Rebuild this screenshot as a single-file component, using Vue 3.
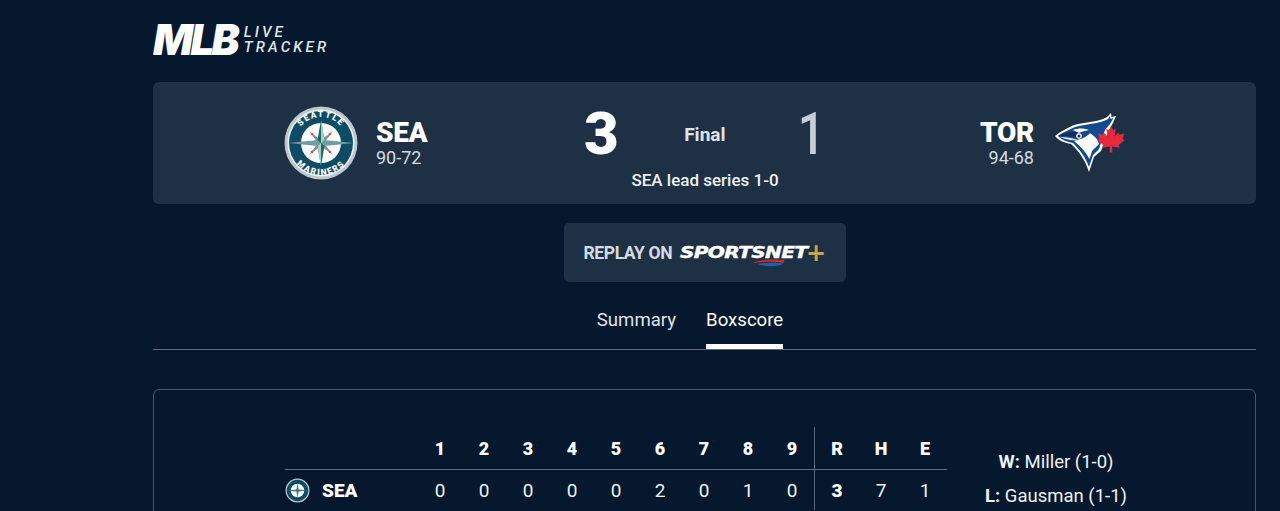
<script setup>
const innings = [1, 2, 3, 4, 5, 6, 7, 8, 9]
const seaLine = [0, 0, 0, 0, 0, 2, 0, 1, 0]
</script>

<template>
  <div class="page">
    <header class="brand">
      <span class="brand-mlb">MLB</span>
      <span class="brand-sub">LIVE<br>TRACKER</span>
    </header>

    <section class="score-card">
      <div class="team">
        <svg class="sea-logo" viewBox="0 0 74 74">
          <defs>
            <path id="arcTop" d="M11 37a26 26 0 0 1 52 0" />
            <path id="arcBottom" d="M5 37a32 32 0 0 0 64 0" />
          </defs>
          <circle cx="37" cy="37" r="36.500" fill="#bcc8ce" />
          <circle cx="37" cy="37" r="33.500" fill="#eef2f3" />
          <circle cx="37" cy="37" r="32" fill="#0e4c66" />
          <circle cx="37" cy="37" r="20" fill="#fff" />
          <text class="ring-text"><textPath href="#arcTop" startOffset="50%" text-anchor="middle">SEATTLE</textPath></text>
          <text class="ring-text"><textPath href="#arcBottom" startOffset="50%" text-anchor="middle">MARINERS</textPath></text>
          <path d="M25 25l12 9 12-9-9 12 9 12-12-9-12 9 9-12z" fill="#7f9099" />
          <path d="M4 37l30-3 3 3-3 3z" fill="#6f9ba2" />
          <path d="M70 37l-30-3-3 3 3 3z" fill="#6f9ba2" />
          <path d="M37 14l3.500 20-3.500 3-3.500-3zM37 60l3.500-20-3.500-3-3.500 3z" fill="#17705f" />
          <path d="M37 14v23l3.500-3zM37 60v-23l-3.500 3z" fill="#a9cfc7" />
          <circle cx="28" cy="28" r="1.300" fill="#d7485c" />
          <circle cx="46" cy="28" r="1.300" fill="#d7485c" />
          <circle cx="28" cy="46" r="1.300" fill="#d7485c" />
          <circle cx="46" cy="46" r="1.300" fill="#d7485c" />
        </svg>
        <div class="team-text">
          <div class="abbr">SEA</div>
          <div class="record">90-72</div>
        </div>
      </div>

      <div class="middle">
        <div class="score-row">
          <span class="runs">3</span>
          <span class="status">Final</span>
          <span class="runs runs-lost">1</span>
        </div>
        <div class="series">SEA lead series 1-0</div>
      </div>

      <div class="team team-right">
        <div class="team-text">
          <div class="abbr">TOR</div>
          <div class="record">94-68</div>
        </div>
        <svg class="tor-logo" viewBox="0 0 70 60">
          <path d="M0 23C6 18 13 15 19 12 30 9 44 9 52 4L56 0 56.500 4 61 3 58 10 54 17 46 38 39 44 34 59C30 47 24 38 16 31 10 30 4 28 0 23z" fill="#fff" />
          <path d="M3 23C8 19 14 17 20 14 30 11 44 11 53 6L55 3 55.500 6 58.500 5 55 11 50 17 44 36 38 42 34 54C31 45 25 37 18 30 12 29 7 27 3 23z" fill="#134a8e" />
          <path d="M19 28C25 26 31 25 35 20 39 23 43 26 44 31L37 38 34.500 46C31 39 25 33 19 28z" fill="#fff" />
          <path d="M18 17C23 15 29 15 34 17 29 18 26 19 24 20 22 19 20 18 18 17z" fill="#fff" />
          <path d="M3 23C9 20 15 19 21 19 24 20 27 22 28 24 22 24 12 23 3 23z" fill="#1a2a55" />
          <path d="M5 24C11 24 18 25 23 27 16 28 10 26 5 24z" fill="#dfe6ee" />
          <circle cx="24" cy="23" r="2.800" fill="#fff" />
          <circle cx="24" cy="23" r="1.500" fill="#1a2a55" />
          <path transform="translate(42 13) scale(.28)" d="M50 0L58 15 67 10 62 38 76 23 79 31 97 28 91 46 99 50 78 68 81 78 54 73 55 95 45 95 46 73 19 78 22 68 1 50 9 46 3 28 21 31 24 23 38 38 33 10 42 15z" fill="#e8283c" />
        </svg>
      </div>
    </section>

    <div class="replay-wrap">
      <a class="replay">
        <span class="replay-label">REPLAY ON</span>
        <span class="sn-logo">
          <span class="sn-word">SPORTSNET</span><span class="sn-plus">+</span>
          <svg class="sn-swoosh" viewBox="0 0 32 8">
            <path d="M0 4C8 0 22 0 32 1L31 4C20 2 10 3 0 4z" fill="#d8281f" />
            <path d="M5 5C14 3 24 3 31 4.500 26 8 14 8 5 5z" fill="#1f5fb0" />
          </svg>
        </span>
      </a>
    </div>

    <nav class="tabs">
      <span class="tab">Summary</span>
      <span class="tab tab-active">Boxscore</span>
    </nav>

    <section class="box-card">
      <div class="box-inner">
        <table class="linescore">
          <thead>
            <tr>
              <th class="team-col"></th>
              <th v-for="n in innings" :key="n">{{ n }}</th>
              <th class="divider">R</th>
              <th>H</th>
              <th>E</th>
            </tr>
          </thead>
          <tbody>
            <tr>
              <td class="team-col">
                <span class="team-cell">
                  <svg class="mini-logo" viewBox="0 0 24 24">
                    <circle cx="12" cy="12" r="11.500" fill="#bcc8ce" />
                    <circle cx="12" cy="12" r="10.300" fill="#0e4c66" />
                    <circle cx="12" cy="12" r="6.500" fill="#fff" />
                    <path d="M12 5l1 6 9 1-9 1-1 6-1-6-9-1 9-1z" fill="#2a7a78" />
                  </svg>
                  SEA
                </span>
              </td>
              <td v-for="(r, i) in seaLine" :key="i">{{ r }}</td>
              <td class="divider strong">3</td>
              <td>7</td>
              <td>1</td>
            </tr>
          </tbody>
        </table>
        <div class="pitchers">
          <div><b>W:</b> Miller (1-0)</div>
          <div><b>L:</b> Gausman (1-1)</div>
        </div>
      </div>
    </section>
  </div>
</template>

<style scoped>
.page {
  width: 1103px;
  height: 511px;
  overflow: hidden;
  margin-left: 153px;
  color: #fff;
  font-family: Roboto, "Liberation Sans", sans-serif;
}

.brand {
  display: flex;
  align-items: flex-end;
  gap: 7px;
  height: 82px;
  padding-bottom: 27px;
  box-sizing: border-box;
}

.brand-mlb {
  font-family: Inter, sans-serif;
  font-weight: 900;
  font-style: italic;
  font-size: 42px;
  line-height: 31px;
  letter-spacing: -2.700px;
}

.brand-sub {
  font-size: 15px;
  line-height: 15px;
  font-style: italic;
  font-weight: 500;
  letter-spacing: 3.100px;
  color: #dfe4ea;
}

.score-card {
  display: grid;
  grid-template-columns: 300px 236px 305px;
  justify-content: center;
  height: 122px;
  background: #1e3044;
  border-radius: 6px;
}

.team {
  display: flex;
  align-items: center;
  gap: 18px;
}

.team-right {
  justify-content: flex-end;
  gap: 21px;
}

.sea-logo {
  width: 74px;
  height: 74px;
}

.tor-logo {
  width: 70px;
  height: 60px;
}

.ring-text {
  font-size: 8.500px;
  font-weight: 900;
  letter-spacing: 1.500px;
  fill: #fff;
}

.team-text {
  display: flex;
  flex-direction: column;
}

.team-right .team-text {
  align-items: flex-end;
}

.abbr {
  font-size: 28px;
  line-height: 30px;
  font-weight: 900;
  letter-spacing: -0.300px;
}

.record {
  font-size: 18px;
  line-height: 20px;
  color: #d5dbe2;
}

.middle {
  display: flex;
  flex-direction: column;
  padding-top: 22px;
}

.score-row {
  display: flex;
  justify-content: space-between;
  align-items: center;
  height: 60px;
}

.runs {
  font-size: 60px;
  line-height: 60px;
  font-weight: 900;
}

.runs-lost {
  display: inline-block;
  margin-right: -5px;
  transform: scaleX(0.8);
  transform-origin: right center;
  font-weight: 500;
  color: #c6ced7;
}

.status {
  font-size: 19px;
  font-weight: 700;
  color: #dfe4ea;
}

.series {
  margin-top: 6px;
  padding-left: 6px;
  text-align: center;
  font-size: 17px;
  font-weight: 500;
  white-space: nowrap;
  color: #eef1f4;
}

.replay-wrap {
  display: flex;
  justify-content: center;
  padding-top: 19px;
}

.replay {
  display: flex;
  align-items: center;
  gap: 8px;
  width: 282px;
  height: 59px;
  padding-left: 20px;
  box-sizing: border-box;
  background: #1e3044;
  border-radius: 5px;
}

.replay-label {
  padding-top: 1px;
  font-size: 17.500px;
  font-weight: 700;
  letter-spacing: -0.400px;
  color: #d5dbe2;
}

.sn-logo {
  position: relative;
  display: flex;
  align-items: center;
}

.sn-word {
  display: inline-block;
  transform: scaleX(1.34);
  transform-origin: left center;
  margin-right: 34px;
  font-family: "DejaVu Sans", sans-serif;
  font-weight: 700;
  font-style: italic;
  font-size: 15px;
  letter-spacing: -0.500px;
  -webkit-text-stroke: 0.4px #fff;
  color: #fff;
}

.sn-plus {
  font-family: "DejaVu Sans", sans-serif;
  font-weight: 700;
  font-size: 24px;
  line-height: 14px;
  margin-left: -3px;
  color: #c9a24a;
}

.sn-swoosh {
  position: absolute;
  left: 72px;
  top: 15px;
  width: 33px;
  height: 8px;
}

.tabs {
  display: flex;
  justify-content: center;
  gap: 30px;
  height: 68px;
  padding-right: 29px;
  box-sizing: border-box;
  border-bottom: 1px solid #5c6b7b;
}

.tab {
  height: 62px;
  padding-top: 26px;
  box-sizing: border-box;
  font-size: 18.600px;
  line-height: 24px;
  color: #dfe4ea;
}

.tab-active {
  height: 67px;
  color: #fff;
  border-bottom: 5px solid #fff;
}

.box-card {
  margin-top: 39px;
  height: 200px;
  padding-top: 37px;
  box-sizing: border-box;
  border: 1px solid #46566a;
  border-radius: 6px;
}

.box-inner {
  display: flex;
  align-items: flex-start;
  padding-left: 131px;
}

.linescore {
  width: 661px;
  border-collapse: collapse;
  table-layout: fixed;
}

.linescore th,
.linescore td {
  width: 44px;
  padding: 0;
  text-align: center;
}

.linescore th {
  height: 42px;
  font-size: 18px;
  font-weight: 900;
  border-bottom: 1px solid #5c6b7b;
}

.linescore td {
  height: 40px;
  font-size: 19px;
  color: #eef1f4;
}

.linescore .team-col {
  width: 133px;
  text-align: left;
}

.linescore .divider {
  border-left: 1px solid #5c6b7b;
}

.linescore .strong {
  font-weight: 900;
  color: #fff;
}

.team-cell {
  display: flex;
  align-items: center;
  gap: 12px;
  font-weight: 900;
  color: #fff;
}

.mini-logo {
  width: 25px;
  height: 25px;
}

.pitchers {
  flex: 1;
  display: flex;
  flex-direction: column;
  gap: 10px;
  padding: 23px 90px 0 0;
  align-items: center;
  font-size: 18.500px;
  line-height: 24px;
  color: #eef1f4;
}
</style>

<style>
html,
body {
  background: #06182e;
  overflow: hidden;
}
</style>
